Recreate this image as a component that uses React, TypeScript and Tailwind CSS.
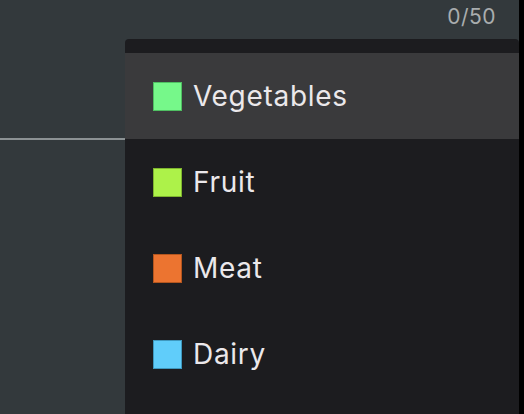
const items = [
  { label: "Vegetables", swatch: "bg-[#76f88a] border-[#4fbf62]", active: true },
  { label: "Fruit", swatch: "bg-[#adf249] border-[#7fb52f]", active: false },
  { label: "Meat", swatch: "bg-[#ec7430] border-[#b4561f]", active: false },
  { label: "Dairy", swatch: "bg-[#60cdfa] border-[#3f98be]", active: false },
];

export default function App() {
  return (
    <div className="flex h-[414px] w-[524px] overflow-hidden bg-black font-['Inter',sans-serif]">
      <div className="flex flex-1 flex-col bg-[#33393c]">
        {/* counter */}
        <div className="flex h-[39px] justify-end pr-[23px] pt-[4px]">
          <span className="text-[21px] leading-[26px] tracking-[0.5px] text-[#a9adae]">0/50</span>
        </div>

        <div className="flex flex-1">
          {/* input underline */}
          <div className="w-[125px]">
            <div className="h-[101px] border-b-2 border-[#8c9294]" />
          </div>

          {/* dropdown */}
          <div className="flex flex-1 flex-col rounded-t-[4px] bg-[#1c1c1f] pt-[14px]">
            {items.map((item) => (
              <div
                key={item.label}
                className={`flex h-[86px] items-center gap-[11px] pl-[28px] ${
                  item.active ? "bg-[#3a3a3c]" : ""
                }`}
              >
                <span className={`h-[29px] w-[29px] border ${item.swatch}`} />
                <span className="text-[28px] leading-[34px] tracking-[0.7px] text-[#ebe8eb]">
                  {item.label}
                </span>
              </div>
            ))}
          </div>
        </div>
      </div>
      <div className="w-[5px]" />
    </div>
  );
}
